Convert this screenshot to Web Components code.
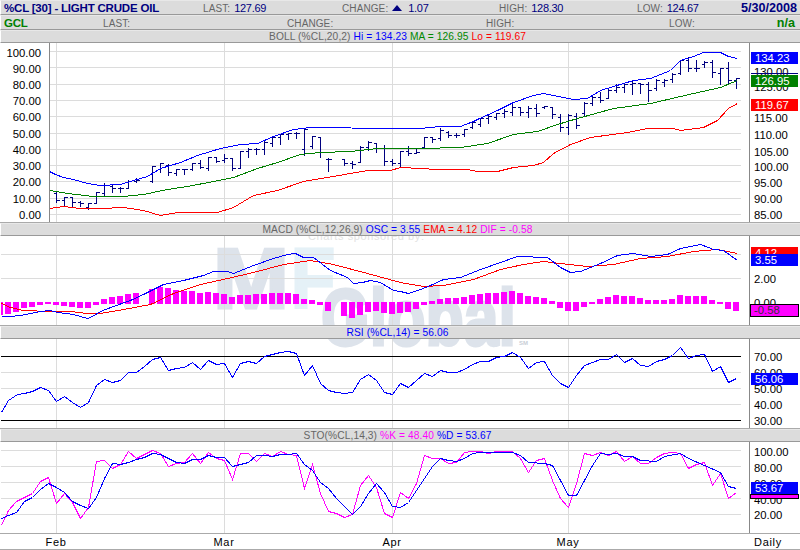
<!DOCTYPE html>
<html>
<head>
<meta charset="utf-8">
<title>%CL chart</title>
<style>
  html, body { margin: 0; padding: 0; background: #fff; }
  body { font: 11px "Liberation Sans", Arial, sans-serif; overflow: hidden; }
</style>
</head>
<body>

<trade-chart>
  <quote-row cols="199px 139px 157px 138px 100px 1fr">
    <span slot="title">%CL [30] - LIGHT CRUDE OIL</span>
    <quote-field label="LAST:" value="127.69"></quote-field>
    <quote-field label="CHANGE:" value="1.07" arrow></quote-field>
    <quote-field label="HIGH:" value="128.30"></quote-field>
    <quote-field label="LOW:" value="124.67"></quote-field>
    <span slot="end">5/30/2008</span>
  </quote-row>
  <quote-row cols="99px 184px 199px 183px 60px 1fr" green>
    <span slot="title">GCL</span>
    <quote-field label="LAST:"></quote-field>
    <quote-field label="CHANGE:"></quote-field>
    <quote-field label="HIGH:"></quote-field>
    <quote-field label="LOW:"></quote-field>
    <span slot="end">n/a</span>
  </quote-row>

  <study-head>BOLL (%CL,20,2) <span style="color:#00f">Hi = 134.23</span> <span style="color:#080">MA = 126.95</span> <span style="color:#f00">Lo = 119.67</span></study-head>
  <study-pane name="boll"></study-pane>

  <study-head>MACD (%CL,12,26,9) <span style="color:#00f">OSC = 3.55</span> <span style="color:#f00">EMA = 4.12</span> <span style="color:#f0f">DIF = -0.58</span></study-head>
  <study-pane name="macd"></study-pane>

  <study-head blue>RSI (%CL,14) = 56.06</study-head>
  <study-pane name="rsi"></study-pane>

  <study-head>STO(%CL,14,3) <span style="color:#f0f">%K = 48.40</span> <span style="color:#00f">%D = 53.67</span></study-head>
  <study-pane name="sto"></study-pane>

  <time-axis></time-axis>
</trade-chart>

<script>
// all chart values are page pixels, each pane's viewBox starts at its own top
const NAVY = '#000080', BLUE = '#0000ff', GREEN = '#008000', RED = '#ff0000', PINK = '#ff00ff';

// [hi, lo, open, close], 3x zoom units, one slot every 8px
const barsA = [
  [210,245,218,240],[228,255,241,232],[228,258,232,245],[240,258,245,250],[245,268,262,250],
  [213,250,248,215],[187,225,220,195],[193,215,197,205],[198,215,205,203],[178,205,203,182],
  [170,187,182,180],null,[135,185,183,137],[125,155,148,130],[130,165,135,155],[145,165,160,148],
  [145,163,148,147],[125,150,148,128],[118,145,128,142],[108,150,145,110],[108,125,110,122],
  [100,125,120,115],[110,150,115,143],[90,140,143,93],[80,112,93,88],[82,102,88,88],[60,102,88,65],
  [45,78,70,50],[38,72,50,42],[35,58,42,40],[33,55,40,38],[25,105,88,28],[45,85,78,48],[50,110,52,95],
  [110,152,118,118],null,[115,135,118,128],[120,145,130,133],[75,125,125,80],[60,90,80,65],
  [65,95,68,85],[72,135,85,122],[115,135,123,128],[90,142,130,92],[75,105,92,100],[80,100,98,97],
  [47,82,80,50],[48,65,52,58],[20,60,55,30],[30,52,35,45],[35,52,45,45],[25,48,42,28],[0,25,20,5]
];
const barsB = [
  [350,378,372,355],[340,368,355,348],[335,358,352,340],[325,350,340,332],[310,345,335,322],
  [320,345,322,335],[315,350,335,325],[310,348,325,340],[315,325,320,318],[317,355,320,342]
];
const barsC = [
  [205,258,215,245],[205,268,245,210],[200,250,212,240],[168,210,205,175],[150,180,175,155],
  [138,170,155,165],[130,158,160,135],[115,140,135,125],[112,140,125,118],[105,148,118,115],
  [112,145,115,118],[108,168,118,135],[100,135,130,105],[100,122,110,105],[82,110,102,88],
  [42,88,85,45],[32,78,45,68],[42,78,68,68],[45,65,58,50],[42,95,50,80],[65,118,85,70],
  [47,118,70,105],[95,130,105,100]
];

function ohlc() {
  let d = '';
  const add = (list, startX, off) => list.forEach((b, i) => {
    if (!b) return;
    const x = startX + i * 8 + .5, y = v => Math.round(off + v / 3) + .5;
    d += `M${x} ${y(b[0])}V${y(b[1])}M${x - 3} ${y(b[2])}H${x}M${x} ${y(b[3])}H${x + 3}`;
  });
  add(barsA, 56, 120);
  add(barsB, 480, 0);
  add(barsC, 560, 45);
  return `<path d="${d}" stroke="${NAVY}" fill="none" stroke-width="1"/>`;
}

// zoom heights of the oscillator columns, k = 0..92, every 8px
const histTop = [
  0,0,0,0,0,0,0,0,0,0,0,0,0,232,224,222,215,212,0,200,195,198,204,206,207,213,210,212,216,224,220,218,216,215,213,213,213,215,231,234,0,0,
  0,0,0,0,0,0,0,0,0,0,0,0,236,230,228,228,224,218,216,213,212,209,206,214,222,225,228,236,0,0,0,0,0,231,225,219,222,222,228,234,234,234,231,219,221,222,222,234,0,0,0
];
const histBot = {
  0:278,1:275,2:270,3:258,4:255,5:248,6:246,7:250,8:253,9:255,10:258,11:258,12:248,
  40:250,41:268,43:282,44:288,45:278,46:270,47:266,48:272,49:276,50:272,51:270,52:260,53:248,
  70:258,71:268,72:268,73:255,74:246,90:246,91:262,92:267
};
function histogram() {
  let out = '';
  histTop.forEach((t, k) => {
    const top = t || 240, bot = t ? 246 : histBot[k];
    if (!bot) return;
    const x = k === 0 ? 1 : k * 8 - 3, w = k === 0 ? 2 : 6;
    const y1 = Math.round(222 + top / 3), y2 = Math.round(222 + bot / 3);
    out += `<rect x="${x}" y="${y1}" width="${w}" height="${y2 - y1}" fill="${PINK}"/>`;
  });
  return out;
}

const STUDIES = {
  boll: {
    top: 43, height: 179, from: 50,
    grid: [51, 67, 84, 100, 116, 133, 149, 165, 181, 198, 214],
    axisLeft: [['100.00',52.7],['90.00',68.5],['80.00',85],['70.00',101],['60.00',117],['50.00',134],['40.00',150],['30.00',166],['20.00',182],['10.00',199],['0.00',215]],
    labels: [['130.00',72],['125.00',87],['115.00',118],['110.00',135],['105.00',151.5],['100.00',167],['95.00',182.5],['90.00',198.5],['85.00',214.5]],
    extra: ohlc,
    lines: [
      [BLUE, '49,171 55,174 63,177 73,179 87,183 100,185 120,184 133,180 147,176 160,168 180,162 197,155 220,148 240,144 257,143 273,136 293,129 310,127 390,128 420,128 440,126 460,126 473,121 477,119 497,110 513,102 533,95 543,93 563,97 573,99 587,98 600,90 613,86 633,80 650,78 670,70 680,60 693,56 703,52 720,52 728,56 737,58'],
      [GREEN, '49,190 67,193 93,196 123,196 143,194 167,189 187,186 213,181 233,177 257,168 277,162 300,154 320,152 350,151 377,148 420,148 460,147 487,143 513,134 537,131 557,124 577,118 613,108 650,103 693,93 720,87 737,80'],
      [RED, '49,208 63,206 80,208 100,208 123,207 143,210 160,215 177,212 217,212 233,207 253,195 277,190 303,181 327,177 367,170 390,170 400,167 420,168 437,169 467,169 477,171 497,171 513,167 533,165 543,162 553,153 570,144 590,137 627,132 647,128 673,128 680,130 703,127 717,120 728,108 737,103']
    ],
    rules: [[751, 798, 73, NAVY]],
    tags: [[52, '134.23', BLUE], [75, '126.95', GREEN], [98.5, '119.67', RED]]
  },
  macd: {
    top: 236, height: 89, from: 1,
    grid: [254, 278],
    labels: [['2.00',279],['0.00',303]],
    extra: histogram,
    lines: [
      [RED, '1,303 10,307 23,310 50,311 70,311 87,313 100,313 123,309 150,304 173,293 200,284 227,278 253,272 283,264 310,260 333,264 367,273 400,282 423,286 443,285 473,279 500,269 523,264 543,261 560,263 587,266 613,264 640,258 667,256 693,251 717,249 737,253'],
      [BLUE, '1,316 10,316 20,315 40,311 50,310 57,312 73,314 87,318 92,316 100,311 113,306 130,300 143,294 163,284 183,280 203,275 213,271 227,271 233,273 253,265 273,258 287,254 295,253 303,257 313,257 330,270 347,277 353,283 362,282 370,280 380,282 393,290 400,291 408,293 420,289 430,285 443,279 460,277 480,269 500,262 517,256 547,257 560,267 570,272 580,271 600,263 617,255 633,253 650,256 667,254 680,248 700,244 713,249 723,250 737,260']
    ],
    tags: [[247, '4.12', RED], [254, '3.55', BLUE], [303.5, '-0.58', PINK, 13]]
  },
  rsi: {
    top: 339, height: 89, from: 1,
    grid: [372, 388, 404],
    black: [356, 420],
    labels: [['70.00',357],['60.00',373],['50.00',389.3],['40.00',405.3],['30.00',421.3]],
    lines: [
      [BLUE, '1,412 8,400 17,394 24,393 32,391 40,387 48,390 56,401 64,396 72,402 80,407 88,402 96,385 104,379 112,382 120,380 128,372 136,372 144,366 152,359 160,357 168,370 176,368 184,367 192,362 200,369 208,360 216,364 224,363 232,377 240,363 248,361 256,363 264,356 272,354 280,352 288,351 296,353 304,375 312,365 320,383 328,390 336,392 344,393 352,392 360,379 368,374 376,380 384,392 392,394 400,383 408,387 416,380 424,373 432,376 440,370 448,372 456,372 464,369 472,364 480,361 488,361 496,357 504,356 512,352 520,357 528,368 536,362 544,361 552,375 560,383 568,387 576,375 584,365 592,362 600,359 608,359 616,354 624,362 632,358 640,365 648,366 656,361 664,359 672,355 680,347 688,358 696,355 704,354 712,371 720,366 728,382 736,378']
    ],
    tags: [[373, '56.06', BLUE]]
  },
  sto: {
    top: 442, height: 91, from: 1,
    grid: [450, 466, 482, 498, 514],
    labels: [['100.00',451.7],['80.00',467.7],['60.00',483.7],['40.00',499.7],['20.00',515.3]],
    lines: [
      [PINK, '1,525 8,510 16,501 24,497 32,493 40,481 48,477 56,503 64,493 72,502 80,518 88,507 96,461 104,460 112,468 120,464 128,451 136,458 144,454 152,450 160,453 168,466 176,463 184,462 192,453 200,463 208,452 216,458 224,460 232,479 240,453 248,453 256,461 264,453 272,456 280,451 288,454 296,455 304,488 312,464 320,493 328,511 336,513 344,517 352,514 360,485 368,475 376,487 384,513 392,517 400,492 408,498 416,483 424,455 432,458 440,458 448,463 456,462 464,452 472,451 480,451 488,453 496,451 512,451 520,458 528,472 536,460 544,458 552,480 560,498 568,507 576,483 584,453 592,455 600,452 608,455 616,451 624,461 632,456 640,463 648,463 656,457 664,453 672,452 680,453 688,468 696,464 704,462 712,485 720,473 728,498 736,492'],
      [BLUE, '1,518 8,515 16,512 24,501 32,497 40,489 48,483 56,487 64,492 72,501 80,505 88,508 96,497 104,478 112,463 120,464 128,462 136,459 144,457 152,453 160,454 168,458 176,462 184,463 192,459 200,459 208,455 216,457 224,457 232,466 240,464 248,462 256,455 264,455 272,456 280,454 288,454 296,453 304,464 312,470 320,482 328,488 336,498 344,506 352,514 360,506 368,493 376,483 384,492 392,506 400,507 408,502 416,490 424,478 432,466 440,458 448,460 456,461 464,458 472,453 480,452 512,452 520,455 528,462 544,463 552,465 560,480 568,495 576,495 584,480 592,465 600,453 608,454 616,453 624,456 632,456 640,460 656,461 664,456 680,453 688,458 704,465 720,472 728,486 736,488']
    ],
    tags: [[494, '', PINK, 5], [482, '53.67', BLUE]]
  }
};

class TradeChart extends HTMLElement {
  constructor() {
    super();
    this.attachShadow({ mode: 'open' });
    this.shadowRoot.innerHTML = `
      <style>
        :host { display: flex; flex-direction: column; position: relative; width: 800px; height: 550px; overflow: hidden; background: #fff; color: #666; }
        svg { position: absolute; left: 0; top: 0; }
        text { font-family: "Liberation Sans", Arial, sans-serif; font-weight: bold; }
        .heavy { stroke-width: 3px; }
        .sponsor { font-weight: normal; font-size: 11px; letter-spacing: .6px; fill: #e2e2e2; }
      </style>
      <svg width="800" height="550" aria-hidden="true">
        <text class="heavy" x="213" y="308" font-size="85" fill="#dde3eb" stroke="#dde3eb" textLength="76" lengthAdjust="spacingAndGlyphs">M</text>
        <text class="heavy" x="291" y="308" font-size="85" fill="#e5f1f7" stroke="#e5f1f7" textLength="44" lengthAdjust="spacingAndGlyphs">F</text>
        <text class="heavy" x="321" y="345" font-size="80" fill="#dde3eb" stroke="#dde3eb" textLength="195" lengthAdjust="spacingAndGlyphs">Global</text>
        <text x="519" y="345" font-size="6" fill="#c8ced6">SM</text>
        <text class="sponsor" x="308" y="240">Charts sponsored by:</text>
      </svg>
      <slot></slot>`;
  }
}

class QuoteRow extends HTMLElement {
  constructor() {
    super();
    this.attachShadow({ mode: 'open' });
    const green = this.hasAttribute('green');
    this.shadowRoot.innerHTML = `
      <style>
        :host { display: block; position: relative; z-index: 1; height: 15px; box-sizing: border-box; background: #dcdcdc; border-top: 1px solid #e8e8e8; border-left: 1px solid #fff; border-bottom: 1px solid #999; }
        .row { display: grid; grid-template-columns: ${this.getAttribute('cols')}; align-items: center; height: 13px; padding-left: 3px; }
        .title, .end { font-weight: bold; font-size: 11.5px; letter-spacing: -.2px; color: ${green ? '#008000' : '#000080'}; white-space: nowrap; }
        .end { justify-self: end; padding-right: ${green ? 5 : 3}px; font-size: 12.6px; letter-spacing: 0; }
      </style>
      <div class="row">
        <div class="title"><slot name="title"></slot></div>
        <slot></slot>
        <div class="end"><slot name="end"></slot></div>
      </div>`;
  }
}

class QuoteField extends HTMLElement {
  constructor() {
    super();
    this.attachShadow({ mode: 'open' });
    const value = this.getAttribute('value');
    const arrow = this.hasAttribute('arrow')
      ? '<svg width="10" height="6" viewBox="0 0 10 6"><path d="M5 0 10 6H0z" fill="#000080"/></svg>' : '';
    this.shadowRoot.innerHTML = `
      <style>
        :host { display: flex; align-items: center; gap: 4px; white-space: nowrap; }
        .label { color: #666; font-size: 10px; letter-spacing: .1px; }
        .value { color: #000080; font-size: 11px; letter-spacing: -.3px; }
        svg + .value { margin-left: 2px; }
      </style>
      <span class="label">${this.getAttribute('label')}</span>${arrow}${value ? `<span class="value">${value}</span>` : ''}`;
  }
}

class StudyHead extends HTMLElement {
  constructor() {
    super();
    this.attachShadow({ mode: 'open' });
    const color = this.hasAttribute('blue') ? '#0000ff' : '#666';
    this.shadowRoot.innerHTML = `
      <style>
        :host { display: block; position: relative; z-index: 1; height: 13px; box-sizing: border-box; background: #dcdcdc; border-top: 1px solid #e8e8e8; border-left: 1px solid #fff; border-bottom: 1px solid #999; padding-right: 6px; text-align: center; line-height: 11px; font-size: 10.2px; letter-spacing: .1px; color: ${color}; white-space: nowrap; }
      </style>
      <slot></slot>`;
  }
}

class PriceTag extends HTMLElement {
  constructor() {
    super();
    this.attachShadow({ mode: 'open' });
    const boxed = this.hasAttribute('h');
    const h = this.getAttribute('h') || 12;
    this.shadowRoot.innerHTML = `
      <style>
        :host { position: absolute; left: ${boxed ? 750 : 751}px; top: ${this.getAttribute('y')}px; box-sizing: border-box; width: ${boxed ? 49 : 47}px; height: ${h}px; padding-left: ${boxed ? 3 : 4}px; background: ${this.getAttribute('color')}; border: ${boxed ? '1px solid #000' : '0'}; color: ${boxed ? '#333' : '#fff'}; font-size: 11.3px; line-height: ${boxed ? 11 : 12}px; overflow: hidden; }
      </style>
      <slot></slot>`;
  }
}

class StudyPane extends HTMLElement {
  constructor() {
    super();
    this.attachShadow({ mode: 'open' });
  }
  connectedCallback() {
    const s = STUDIES[this.getAttribute('name')];
    const right = 741;
    const grid = s.grid.map(y => `M${s.from} ${y + .5}H${right}`).join('');
    const vert = [56, 224, 392, 568].map(x => `M${x + .5} ${s.top}V${s.top + s.height}`).join('');
    const black = (s.black || []).map(y => `<path d="M1 ${y + .5}H${right}" stroke="#000"/>`).join('');
    const lines = s.lines.map(l => `<polyline points="${l[1]}" stroke="${l[0]}" fill="none" transform="translate(.5 .5)"/>`).join('');
    const axis = (list, x, anchor) => (list || []).map(l =>
      `<text x="${x}" y="${l[1] + 4}" text-anchor="${anchor}">${l[0]}</text>`).join('');
    const rules = (s.rules || []).map(r => `<path d="M${r[0]} ${r[2] + .5}H${r[1]}" stroke="${r[3]}"/>`).join('');
    const tags = s.tags.map(t =>
      `<price-tag y="${t[0] - s.top}" color="${t[2]}"${t[3] ? ` h="${t[3]}"` : ''}>${t[1]}</price-tag>`).join('');
    const leftAxis = s.axisLeft ? `<path d="M49.5 ${s.top}V${s.top + s.height}" stroke="#888"/>` : '';
    this.shadowRoot.innerHTML = `
      <style>
        :host { display: block; position: relative; z-index: 1; height: ${s.height + 1}px; box-sizing: border-box; border-bottom: 1px solid #aaa; }
        svg { display: block; }
        text { font-family: "Liberation Sans", Arial, sans-serif; font-size: 11.3px; fill: #000; }
      </style>
      <svg width="800" height="${s.height}" viewBox="0 ${s.top} 800 ${s.height}" shape-rendering="crispEdges">
        <path d="${grid}${vert}" stroke="#dcdcdc" fill="none"/>
        ${black}
        ${s.extra ? s.extra() : ''}
        ${lines}
        ${leftAxis}
        <path d="M749.5 ${s.top}V${s.top + s.height}" stroke="#888"/>
        ${axis(s.axisLeft, 41, 'end')}
        ${axis(s.labels, 754, 'start')}
        ${rules}
      </svg>
      ${tags}`;
  }
}

class TimeAxis extends HTMLElement {
  constructor() {
    super();
    this.attachShadow({ mode: 'open' });
    this.shadowRoot.innerHTML = `
      <style>
        :host { display: grid; position: relative; z-index: 1; grid-template-columns: 112px 224px 112px 240px 112px; height: 16px; box-sizing: border-box; border-bottom: 1px solid #aaa; align-items: end; color: #000; font-size: 11px; letter-spacing: .7px; line-height: 14px; text-align: center; }
        .daily { text-align: left; padding-left: 66px; }
      </style>
      <span>Feb</span><span>Mar</span><span>Apr</span><span>May</span><span class="daily">Daily</span>`;
  }
}

customElements.define('trade-chart', TradeChart);
customElements.define('quote-row', QuoteRow);
customElements.define('quote-field', QuoteField);
customElements.define('study-head', StudyHead);
customElements.define('price-tag', PriceTag);
customElements.define('study-pane', StudyPane);
customElements.define('time-axis', TimeAxis);
</script>
</body>
</html>
